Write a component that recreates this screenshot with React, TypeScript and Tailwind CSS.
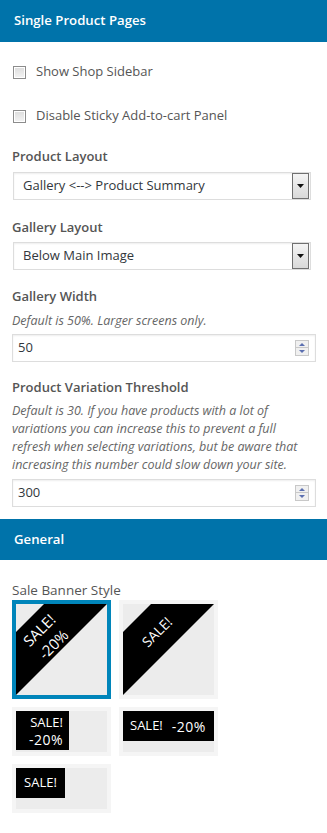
const font = { fontFamily: '"Open Sans", "Noto Sans", sans-serif' };

function SectionHeader({ title, tall = false }: { title: string; tall?: boolean }) {
  return (
    <div
      className={`flex ${tall ? "h-[42px]" : "h-[41px]"} items-center bg-[#0073aa] px-[14px] text-[13.2px] font-semibold text-white`}
    >
      {title}
    </div>
  );
}

function Checkbox({ label }: { label: string }) {
  return (
    <div className="flex h-[44px] items-center">
      <span className="ml-[1px] h-[13px] w-[13px] border border-[#8c8c8c] bg-gradient-to-b from-[#dcdcdc] to-[#f4f4f4] shadow-[inset_0_0_0_1px_#fff]" />
      <span className="ml-[10px] text-[13px] text-[#555]">{label}</span>
    </div>
  );
}

function FieldLabel({ children, className = "" }: { children: string; className?: string }) {
  return (
    <div className={`h-[18px] text-[13px] leading-[18px] font-semibold text-[#555] ${className}`}>
      {children}
    </div>
  );
}

function SelectBox({ value, className = "" }: { value: string; className?: string }) {
  return (
    <div
      className={`ml-[1px] flex h-[28px] w-[298px] items-center justify-between border border-[#ddd] bg-white pl-[9px] pr-[1px] shadow-[inset_0_1px_2px_rgba(0,0,0,0.07)] ${className}`}
    >
      <span className="text-[13px] text-[#32373c]">{value}</span>
      <span className="flex h-[26px] w-[17px] items-center justify-center border border-[#707070] bg-gradient-to-b from-[#f5f5f5] to-[#d9d9d9]">
        <svg width="7" height="4" viewBox="0 0 7 4">
          <path d="M0 0h7L3.5 4z" fill="#111" />
        </svg>
      </span>
    </div>
  );
}

function NumberBox({ value, className = "" }: { value: string; className?: string }) {
  return (
    <div
      className={`flex h-[28px] w-[304px] items-center justify-between border border-[#ddd] bg-white pl-[5px] pr-[6px] shadow-[inset_0_1px_2px_rgba(0,0,0,0.07)] ${className}`}
    >
      <span className="text-[13px] text-[#32373c]">{value}</span>
      <span className="flex w-[14px] flex-col">
        <span className="flex h-[8px] items-center justify-center border border-[#c8c8c8] bg-[#f0f0f0]">
          <svg width="6" height="3" viewBox="0 0 6 3">
            <path d="M0 3h6L3 0z" fill="#5b6fb0" />
          </svg>
        </span>
        <span className="flex h-[8px] items-center justify-center border border-t-0 border-[#c8c8c8] bg-[#f0f0f0]">
          <svg width="6" height="3" viewBox="0 0 6 3">
            <path d="M0 0h6L3 3z" fill="#5b6fb0" />
          </svg>
        </span>
      </span>
    </div>
  );
}

// corner ribbon drawn as a black band across the top-left of the swatch
function Diagonal({ discount }: { discount: boolean }) {
  return (
    <div className="relative h-full w-full overflow-hidden bg-[#ececec]">
      <svg className="absolute inset-0" width="91" height="91" viewBox="0 0 91 91">
        <path d="M0 28L28 0H91L0 91z" fill="#000" />
      </svg>
      {discount ? (
        <div className="absolute left-[0px] top-[13px] h-[40px] w-[60px] -rotate-45 text-center text-[15px] leading-[20px] text-white">
          SALE!
          <br />
          -20%
        </div>
      ) : (
        <div className="absolute left-[4px] top-[18px] h-[20px] w-[60px] -rotate-45 text-center text-[14px] leading-[20px] text-white">
          SALE!
        </div>
      )}
    </div>
  );
}

function BannerBox({
  selected = false,
  tall = false,
  children,
}: {
  selected?: boolean;
  tall?: boolean;
  children: React.ReactNode;
}) {
  return (
    <div
      className={`${tall ? "h-[99px]" : "h-[49px]"} w-[99px] border-[4px] ${
        selected ? "border-[#0085ba]" : "border-[#f5f5f5]"
      }`}
    >
      <div className="h-full w-full bg-[#ececec]">{children}</div>
    </div>
  );
}

export default function App() {
  return (
    <div className="h-[833px] w-[327px] bg-white" style={font}>
      <SectionHeader title="Single Product Pages" tall />
      <div className="px-[12px] pt-[8px]">
        <Checkbox label="Show Shop Sidebar" />
        <Checkbox label="Disable Sticky Add-to-cart Panel" />

        <FieldLabel className="mt-[9px]">Product Layout</FieldLabel>
        <SelectBox className="mt-[7px]" value="Gallery <--> Product Summary" />

        <FieldLabel className="mt-[18px]">Gallery Layout</FieldLabel>
        <SelectBox className="mt-[6px]" value="Below Main Image" />

        <FieldLabel className="mt-[17px]">Gallery Width</FieldLabel>
        <p className="mt-[7px] text-[12.5px] leading-[18px] italic text-[#666]">
          Default is 50%. Larger screens only.
        </p>
        <NumberBox className="mt-[4px]" value="50" />

        <FieldLabel className="mt-[16px]">Product Variation Threshold</FieldLabel>
        <p className="mt-[6px] pr-[6px] text-[12.5px] leading-[18px] italic text-[#666]">
          Default is 30. If you have products with a lot of variations you can increase this to
          prevent a full refresh when selecting variations, but be aware that increasing this
          number could slow down your site.
        </p>
        <NumberBox className="mt-[5px]" value="300" />
      </div>

      <div className="mt-[12px]">
        <SectionHeader title="General" />
      </div>
      <div className="px-[12px]">
        <div className="mt-[21px] h-[18px] text-[13.5px] leading-[18px] text-[#555]">
          Sale Banner Style
        </div>
        <div className="mt-[1px] grid w-[206px] grid-cols-2 gap-[8px]">
          <BannerBox selected tall>
            <Diagonal discount />
          </BannerBox>
          <BannerBox tall>
            <Diagonal discount={false} />
          </BannerBox>
          <BannerBox>
            <div className="flex h-[39px] w-[53px] flex-col items-end justify-center bg-black pr-[6px] text-[13px] leading-[18px] text-white">
              <span>SALE!</span>
              <span className="text-[14px] tracking-[0.5px]">-20%</span>
            </div>
          </BannerBox>
          <BannerBox>
            <div className="flex h-[30px] w-full items-center gap-[9px] bg-black pl-[7px] text-[13px] text-white">
              <span>SALE!</span>
              <span className="text-[14px] tracking-[0.5px]">-20%</span>
            </div>
          </BannerBox>
          <BannerBox>
            <div className="flex h-[30px] w-[49px] items-center justify-center bg-black text-[13px] text-white">
              SALE!
            </div>
          </BannerBox>
        </div>
      </div>
    </div>
  );
}
